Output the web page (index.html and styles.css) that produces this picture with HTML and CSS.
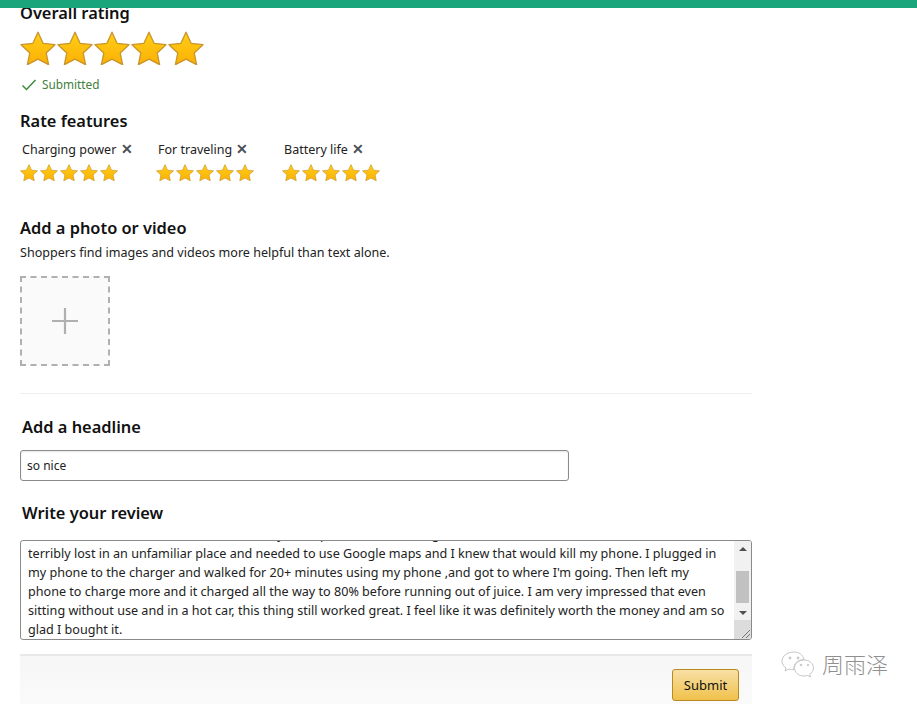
FILE: index.html
```html
<!DOCTYPE html>
<html lang="en">
<head>
    <meta charset="UTF-8">
    <title>Create review</title>
    <link rel="stylesheet" href="styles.css">
</head>
<body>
    <svg class="defs" width="0" height="0">
        <defs>
            <linearGradient id="gold" x1="0" y1="0" x2="0" y2="1">
                <stop offset="0" stop-color="#ffcf18"/>
                <stop offset="1" stop-color="#fbb003"/>
            </linearGradient>
            <symbol id="star" viewBox="0 0 36 34">
                <path d="M18 1.200l5.100 11.100 11.900 1.400-8.800 8.200 2.400 11.800L18 28.200 7.400 33.700l2.400-11.800L1 13.700l11.900-1.400z" fill="url(#gold)" stroke="#c9952b" stroke-width="1.300" stroke-linejoin="round"/>
            </symbol>
        </defs>
    </svg>

    <div class="topbar"></div>

    <div id="main">
        <h2 class="title overall">Overall rating</h2>
        <div class="stars big">
            <svg><use href="#star"/></svg>
            <svg><use href="#star"/></svg>
            <svg><use href="#star"/></svg>
            <svg><use href="#star"/></svg>
            <svg><use href="#star"/></svg>
        </div>
        <div class="submitted">
            <svg width="16" height="12" viewBox="0 0 16 12"><path d="M1.500 6.500l4 4 9-9.500" fill="none" stroke="#3f8a3f" stroke-width="1.500"/></svg>
            <span>Submitted</span>
        </div>

        <h2 class="title features">Rate features</h2>
        <div class="feature-row">
            <div class="feature f1">
                <div class="feature-name">Charging power <span class="x">&#10005;</span></div>
                <div class="stars small">
                    <svg><use href="#star"/></svg>
                    <svg><use href="#star"/></svg>
                    <svg><use href="#star"/></svg>
                    <svg><use href="#star"/></svg>
                    <svg><use href="#star"/></svg>
                </div>
            </div>
            <div class="feature f2">
                <div class="feature-name">For traveling <span class="x">&#10005;</span></div>
                <div class="stars small">
                    <svg><use href="#star"/></svg>
                    <svg><use href="#star"/></svg>
                    <svg><use href="#star"/></svg>
                    <svg><use href="#star"/></svg>
                    <svg><use href="#star"/></svg>
                </div>
            </div>
            <div class="feature">
                <div class="feature-name">Battery life <span class="x">&#10005;</span></div>
                <div class="stars small">
                    <svg><use href="#star"/></svg>
                    <svg><use href="#star"/></svg>
                    <svg><use href="#star"/></svg>
                    <svg><use href="#star"/></svg>
                    <svg><use href="#star"/></svg>
                </div>
            </div>
        </div>

        <h2 class="title photo">Add a photo or video</h2>
        <p class="hint">Shoppers find images and videos more helpful than text alone.</p>
        <div class="upload">
            <svg width="28" height="28" viewBox="0 0 28 28"><path d="M14 1v26M1 14h26" stroke="#b0b0b0" stroke-width="2.200" fill="none"/></svg>
        </div>

        <hr class="line">

        <h2 class="title indent headline">Add a headline</h2>
        <div class="input">so nice</div>

        <h2 class="title indent review">Write your review</h2>
        <div class="textarea">
            <div class="text">
                <div class="text-inner">Last week I had left the house with a nearly dead phone and no charger on me, and to make it worse I was
terribly lost in an unfamiliar place and needed to use Google maps and I knew that would kill my phone. I plugged in
my phone to the charger and walked for 20+ minutes using my phone ,and got to where I'm going. Then left my
phone to charge more and it charged all the way to 80% before running out of juice. I am very impressed that even
sitting without use and in a hot car, this thing still worked great. I feel like it was definitely worth the money and am so
glad I bought it.</div>
            </div>
            <div class="scrollbar">
                <span class="arrow up"></span>
                <span class="track"><span class="thumb"></span></span>
                <span class="arrow down"></span>
                <span class="corner">
                    <svg width="11" height="11" viewBox="0 0 11 11"><path d="M10 2L2 10M10 6l-4 4" stroke="#777" stroke-width="1"/></svg>
                </span>
            </div>
        </div>

        <div class="footer">
            <button class="submit">Submit</button>
        </div>
    </div>

    <div class="watermark">
        <svg width="36" height="28" viewBox="0 0 36 28" fill="#fff" stroke="#c6c6c6" stroke-width="1">
            <path d="M14 2C7 2 2 6 2 11c0 3 1.500 5 4 7l-1 3 4-2c1.500.5 3 .7 5 .6C13 14 18 9.500 24 9.500 23 5 19 2 14 2z"/>
            <path d="M24 10c-5.500 0-9.500 3.700-9.500 8s4 8 9.500 8c1.300 0 2.500-.2 3.500-.6l3 1.600-.8-2.800c2.300-1.500 3.800-3.700 3.800-6.200 0-4.300-4-8-9.500-8z"/>
            <circle cx="10" cy="8" r="1" fill="#c6c6c6"/>
            <circle cx="18" cy="8" r="1" fill="#c6c6c6"/>
            <circle cx="21" cy="15" r=".8" fill="#c6c6c6"/>
            <circle cx="28" cy="15" r=".8" fill="#c6c6c6"/>
        </svg>
        <span>周雨泽</span>
    </div>
</body>
</html>
```

FILE: styles.css
```css
html, body {
    margin: 0;
    height: 100%;
    overflow: hidden;
    background-color: white;
}
body {
    font-family: "Noto Sans", "Noto Sans CJK SC", sans-serif;
    color: #111;
}
.defs {
    position: absolute;
}
.topbar {
    position: absolute;
    top: 0;
    left: 0;
    right: 0;
    height: 8px;
    background-color: #1aa67a;
}
#main {
    width: 732px;
    margin-left: 20px;
}
.title {
    margin: 0;
    font-size: 16.400px;
    line-height: 22px;
    font-weight: 600;
}
.indent {
    margin-left: 2px;
}
.overall {
    padding-top: 2px;
}
.stars {
    display: flex;
}
.stars svg {
    display: block;
}
.big {
    margin-top: 7px;
    gap: 1px;
}
.big svg {
    width: 36px;
    height: 34px;
}
.small {
    margin-top: 4px;
    gap: 2px;
}
.small svg {
    width: 18px;
    height: 17px;
}
.submitted {
    display: flex;
    align-items: center;
    gap: 5px;
    margin-top: 11px;
    font-size: 11.800px;
    line-height: 17px;
    color: #40803a;
}
.submitted svg {
    margin-left: 1px;
}
.features {
    margin-top: 17px;
}
.feature-row {
    display: flex;
    margin-top: 8px;
}
.feature {
    width: 126px;
}
.f1 {
    width: 136px;
}
.feature-name {
    margin-left: 2px;
    font-size: 12.500px;
    line-height: 20px;
    color: #222;
}
.x {
    margin-left: 1px;
    font-size: 14px;
    font-weight: 600;
    line-height: 14px;
    color: #4a5058;
}
.photo {
    margin-top: 36px;
}
.hint {
    margin: 5px 0 0;
    font-size: 12.550px;
    line-height: 18px;
    color: #222;
}
.upload {
    display: flex;
    align-items: center;
    justify-content: center;
    width: 86px;
    height: 86px;
    margin-top: 14px;
    border: 2px dashed #b0b0b0;
    background-color: #fafafa;
}
.line {
    height: 1px;
    margin: 27px 0 0;
    border: none;
    background-color: #eee;
}
.headline {
    margin-top: 22px;
}
.input {
    width: 541px;
    height: 29px;
    margin-top: 12px;
    padding-left: 6px;
    border: 1px solid #8a8a8a;
    border-radius: 3px;
    font-size: 12px;
    line-height: 29px;
    color: #222;
    box-shadow: inset 0 1px 2px rgba(0, 0, 0, 0.1);
}
.review {
    margin-top: 21px;
}
.textarea {
    display: flex;
    height: 98px;
    margin-top: 16px;
    border: 1px solid #8a8a8a;
    border-radius: 3px;
    overflow: hidden;
}
.text {
    flex: 1;
    overflow: hidden;
    padding-left: 7px;
}
.text-inner {
    margin-top: -16px;
    font-size: 12.600px;
    line-height: 19px;
    white-space: pre;
    color: #222;
}
.scrollbar {
    display: flex;
    flex-direction: column;
    align-items: center;
    width: 17px;
    background-color: #f1f1f1;
}
.arrow {
    width: 0;
    height: 0;
    flex: none;
    border-left: 4px solid transparent;
    border-right: 4px solid transparent;
}
.up {
    margin: 6px 0 5px;
    border-bottom: 4px solid #505050;
}
.down {
    margin: 5px 0 5px;
    border-top: 4px solid #505050;
}
.track {
    display: block;
    width: 100%;
    height: 50px;
    padding-top: 15px;
    box-sizing: border-box;
}
.thumb {
    display: block;
    height: 32px;
    background-color: #c1c1c1;
    margin: 0 2px;
}
.corner {
    display: flex;
    align-items: flex-end;
    justify-content: flex-end;
    width: 100%;
    flex: 1;
    background-color: #dcdcdc;
}
.footer {
    display: flex;
    justify-content: flex-end;
    height: 60px;
    margin-top: 14px;
    padding: 13px 13px 0 0;
    box-sizing: border-box;
    border-top: 2px solid #e8e8e8;
    background: linear-gradient(#f6f6f6, #fbfbfb);
}
.submit {
    width: 67px;
    height: 32px;
    padding: 0;
    border: 1px solid #b8891f;
    border-radius: 3px;
    background: linear-gradient(#f7dfa5, #f0c14b);
    font-family: inherit;
    font-size: 13px;
    color: #111;
}
.watermark {
    position: absolute;
    left: 780px;
    top: 649px;
    display: flex;
    align-items: center;
    gap: 6px;
    font-size: 22px;
    font-weight: 300;
    line-height: 30px;
    color: #8f8f8f;
}
```
